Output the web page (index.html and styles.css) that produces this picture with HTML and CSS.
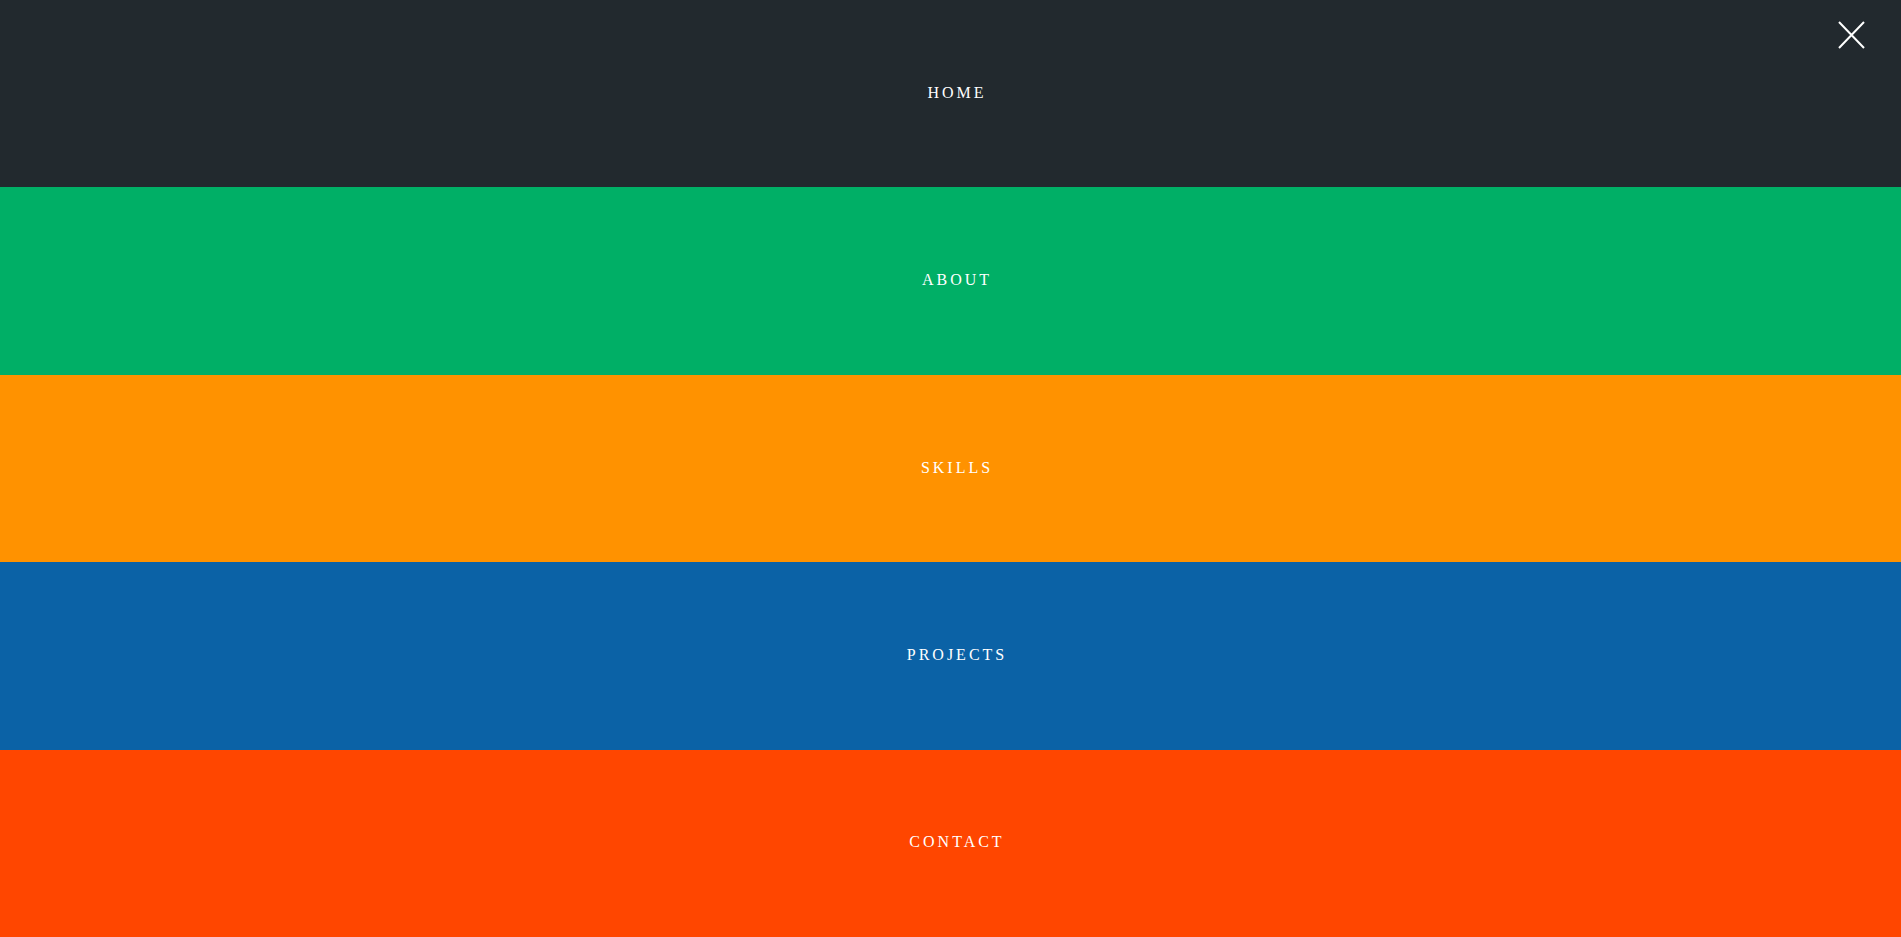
FILE: index.html
```html
<!DOCTYPE html>
<html lang="en">
<head>
<meta charset="utf-8">
<title>Menu</title>
<link rel="stylesheet" href="styles.css">
</head>
<body>
<nav class="menu">
  <a class="menu-item item-home" href="#home">HOME</a>
  <a class="menu-item item-about" href="#about">ABOUT</a>
  <a class="menu-item item-skills" href="#skills">SKILLS</a>
  <a class="menu-item item-projects" href="#projects">PROJECTS</a>
  <a class="menu-item item-contact" href="#contact">CONTACT</a>
</nav>
<button class="close" aria-label="Close">
  <svg width="27" height="28" viewBox="0 0 27 28"><path d="M1 1 L26 27 M26 1 L1 27" stroke="#fff" stroke-width="2" fill="none"/></svg>
</button>
</body>
</html>
```
FILE: styles.css
```css
html, body {
  margin: 0;
  padding: 0;
  height: 100%;
}
body {
  font-family: "Liberation Serif", "Times New Roman", serif;
  overflow: hidden;
}
.menu {
  display: flex;
  flex-direction: column;
  height: 100vh;
}
.menu-item {
  flex: 1;
  display: flex;
  align-items: center;
  justify-content: center;
  color: #fff;
  text-decoration: none;
  font-size: 16px;
  letter-spacing: 3px;
  padding-left: 13px;
  padding-bottom: 2px;
}
.item-home { background: #22292e; }
.item-about { background: #00af66; }
.item-skills { background: #ff9200; }
.item-projects { background: #0b62a6; }
.item-contact { background: #ff4600; }
.close {
  position: absolute;
  top: 21px;
  right: 36px;
  background: none;
  border: 0;
  padding: 0;
  margin: 0;
  line-height: 0;
  cursor: pointer;
}
```
